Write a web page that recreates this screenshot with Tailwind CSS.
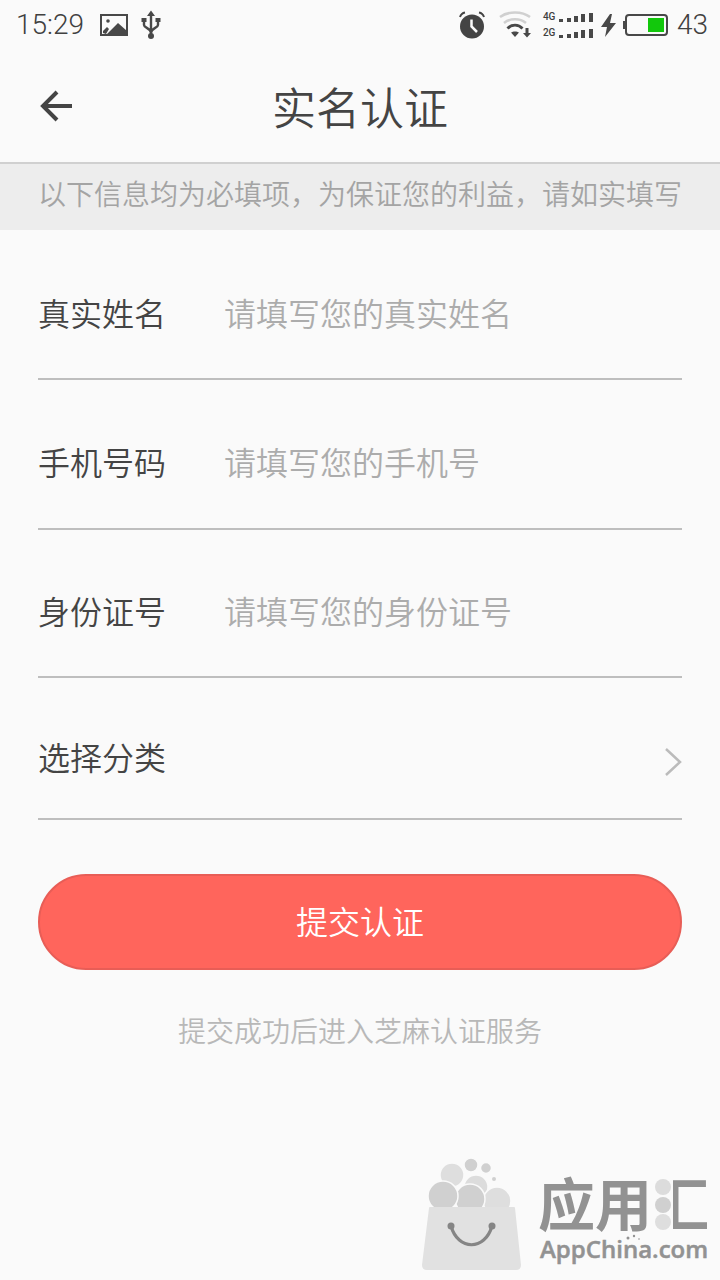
<!DOCTYPE html>
<html lang="zh-CN">
<head>
<meta charset="utf-8">
<meta name="viewport" content="width=device-width, initial-scale=1">
<title>实名认证</title>
<script src="https://cdn.jsdelivr.net/npm/@tailwindcss/browser@4"></script>
</head>
<body class="flex min-h-screen flex-col bg-[#fafafa] font-['Noto_Sans_CJK_SC',sans-serif] font-[350] text-[#444]">

<!-- Status bar -->
<div class="flex h-[50px] items-center justify-between pr-3 pl-4 font-[Roboto,sans-serif] text-[28px] leading-none font-light text-[#404040]">
  <div class="flex items-center">
    <span>15:29</span>
    <svg class="ml-4" width="28" height="24" viewBox="0 0 28 24" fill="none" aria-hidden="true">
      <rect x="1" y="2" width="26" height="20" stroke="#484848" stroke-width="2"/>
      <circle cx="8" cy="8" r="1.8" fill="#484848"/>
      <path d="M3 20v-2l4-4 2 2-3 5zM6 22l12-12 9 8v4z" fill="#484848"/>
    </svg>
    <svg class="ml-3" width="22" height="30" viewBox="0 0 22 30" fill="none" stroke="#484848" stroke-width="2.4" aria-hidden="true">
      <path d="M11 4v22M4 11v4c0 3 7 3 7 8M18 11v4c0 3-7 3-7 8"/>
      <path d="M7 6 11 0.500 15 6zM1.500 8h5v4h-5zM15.500 8h5v4h-5z" fill="#484848" stroke="none"/>
      <circle cx="11" cy="26" r="3" fill="#484848" stroke="none"/>
    </svg>
  </div>
  <div class="flex items-center">
    <svg width="26" height="28" viewBox="0 0 26 28" fill="none" aria-hidden="true">
      <circle cx="13" cy="15.500" r="12" fill="#444"/>
      <path d="M1 6c1-3 2-4 5-4.500M25 6c-1-3-2-4-5-4.500" stroke="#444" stroke-width="2"/>
      <path d="M12.500 8.500v7l5.500 5.500" stroke="#fafafa" stroke-width="2.500"/>
    </svg>
    <svg class="ml-3.5" width="32" height="28" viewBox="0 0 32 28" fill="none" aria-hidden="true">
      <path d="M1 6c8-6 22-6 30 0M5 12c6-5 16-5 22 0" stroke="#d0d0d0" stroke-width="2.500"/>
      <path d="M8.500 17.500c4-4.500 11-4.500 15 0" stroke="#484848" stroke-width="2.800"/>
      <path d="M12 21.500c2-1.500 6-1.500 8 0l-4 4.500zM26.500 17h3v5h2.500l-4 4.500-4-4.500h2.500z" fill="#484848"/>
    </svg>
    <div class="ml-3 flex flex-col gap-1">
      <div class="flex items-end gap-1 text-[10px] leading-[12px] font-medium">
        <span class="w-3">4G</span>
        <svg width="34" height="12" viewBox="0 0 34 12" fill="#484848" aria-hidden="true"><path d="M0 8h4v3H0zM8 7h4v4H8zM15 5h4v6h-4zM22 3h4v8h-4zM30 2h4v9h-4z"/></svg>
      </div>
      <div class="flex items-end gap-1 text-[10px] leading-[12px] font-medium">
        <span class="w-3">2G</span>
        <svg width="34" height="12" viewBox="0 0 34 12" fill="#484848" aria-hidden="true"><path d="M0 8h4v3H0zM8 7h4v4H8zM15 5h4v6h-4zM22 3h4v8h-4zM30 2h4v9h-4z"/></svg>
      </div>
    </div>
    <svg class="ml-2" width="16" height="24" viewBox="0 0 16 24" fill="#484848" aria-hidden="true"><path d="M9 1 0 14h6L4 24 15 10H9l2-9z"/></svg>
    <svg class="ml-1.5" width="46" height="24" viewBox="0 0 46 24" fill="none" aria-hidden="true">
      <rect x="3" y="2" width="41" height="20" rx="3" stroke="#484848" stroke-width="2"/>
      <path d="M0 8h3v8H0z" fill="#484848"/>
      <path d="M25 5h16v14H25z" fill="#12c80c"/>
    </svg>
    <span class="ml-2">43</span>
  </div>
</div>

<!-- Title bar -->
<header class="grid h-[114px] grid-cols-[80px_1fr_80px] items-center border-b-2 border-[#d0d0d0]">
  <button type="button" aria-label="返回" class="flex justify-center pl-8">
    <svg width="32" height="32" viewBox="0 0 32 32" fill="none" stroke="#444" aria-hidden="true"><path d="M17 2 3 16l14 14" stroke-width="4"/><path d="M3 16h29" stroke-width="4"/></svg>
  </button>
  <h1 class="text-center text-[44px] leading-none">实名认证</h1>
</header>

<p class="h-[66px] bg-[#ededed] px-[38px] text-center text-[28px] leading-[58px] whitespace-nowrap text-[#a4a4a4]">以下信息均为必填项，为保证您的利益，请如实填写</p>

<form class="px-[38px] text-[32px] leading-[48px]">
  <div class="flex h-[150px] items-center border-b-2 border-[#bebebe] pt-4">
    <label for="name" class="w-[186px] shrink-0">真实姓名</label>
    <input id="name" type="text" placeholder="请填写您的真实姓名" class="h-12 min-w-0 flex-1 outline-none placeholder:text-[#acacac]">
  </div>
  <div class="flex h-[150px] items-center border-b-2 border-[#bebebe] pt-3.5">
    <label for="phone" class="w-[186px] shrink-0">手机号码</label>
    <input id="phone" type="tel" placeholder="请填写您的手机号" class="h-12 min-w-0 flex-1 outline-none placeholder:text-[#acacac]">
  </div>
  <div class="flex h-[148px] items-center border-b-2 border-[#bebebe] pt-3.5">
    <label for="idcard" class="w-[186px] shrink-0">身份证号</label>
    <input id="idcard" type="text" placeholder="请填写您的身份证号" class="h-12 min-w-0 flex-1 outline-none placeholder:text-[#acacac]">
  </div>
  <button type="button" class="flex h-[142px] w-full items-center justify-between border-b-2 border-[#bebebe] pt-4">
    <span>选择分类</span>
    <svg class="mt-3" width="18" height="28" viewBox="0 0 18 28" fill="none" stroke="#bbb" stroke-width="2.500" aria-hidden="true"><path d="M2 1l14 13L2 27"/></svg>
  </button>
  <button type="submit" class="mt-[54px] h-24 w-full rounded-full border-2 border-[#e85d56] bg-[#ff655c] pb-1 text-white">提交认证</button>
</form>

<p class="mt-[38px] text-center text-[28px] leading-[44px] text-[#b8b8b8]">提交成功后进入芝麻认证服务</p>

<!-- Store badge -->
<footer class="mt-auto flex justify-end pr-2">
  <svg width="292" height="124" viewBox="0 0 292 124" role="img" aria-label="应用汇 AppChina.com">
    <g stroke="#fafafa" stroke-width="1.500">
      <circle cx="32" cy="19" r="12" fill="#dedede"/>
      <circle cx="56" cy="31" r="12" fill="#dcdcdc"/>
      <circle cx="77" cy="45" r="14" fill="#dedede"/>
      <circle cx="50" cy="43" r="15" fill="#d0d0d0"/>
      <circle cx="23" cy="40" r="15" fill="#d0d0d0"/>
      <circle cx="51" cy="9" r="7" fill="#d0d0d0"/>
      <circle cx="66" cy="12" r="5.500" fill="#d0d0d0"/>
    </g>
    <circle cx="74" cy="23" r="2" fill="#d0d0d0"/>
    <path d="M9 52q0-1 1-1h84q1 0 1 1l6 57q0 5-5 5H7q-5 0-5-5z" fill="#e1e1e1"/>
    <path d="M31 70c7 25 34 25 41 0" fill="none" stroke="#858585" stroke-width="3.200"/>
    <circle cx="31" cy="70" r="3.500" fill="#858585"/><circle cx="72" cy="70" r="3.500" fill="#858585"/>
    <text x="118" y="70" font-size="57" font-weight="700" fill="#929292">应用汇</text>
    <path d="M233 19h20v58h-20z" fill="#fafafa"/>
    <circle cx="243" cy="31" r="8" fill="#dcdcdc"/>
    <circle cx="243" cy="49" r="8" fill="#d0d0d0"/>
    <circle cx="243" cy="66" r="8" fill="#dedede"/>
    <text x="120" y="102" font-family="Open Sans, sans-serif" font-size="24" font-weight="600" fill="#929292" stroke="#929292" stroke-width="0.500">AppChina.com</text>
    <circle cx="208" cy="82" r="1.500" fill="#929292"/><circle cx="214" cy="80" r="1.200" fill="#929292"/><circle cx="219" cy="83" r="1" fill="#bbb"/>
  </svg>
</footer>
</body>
</html>
